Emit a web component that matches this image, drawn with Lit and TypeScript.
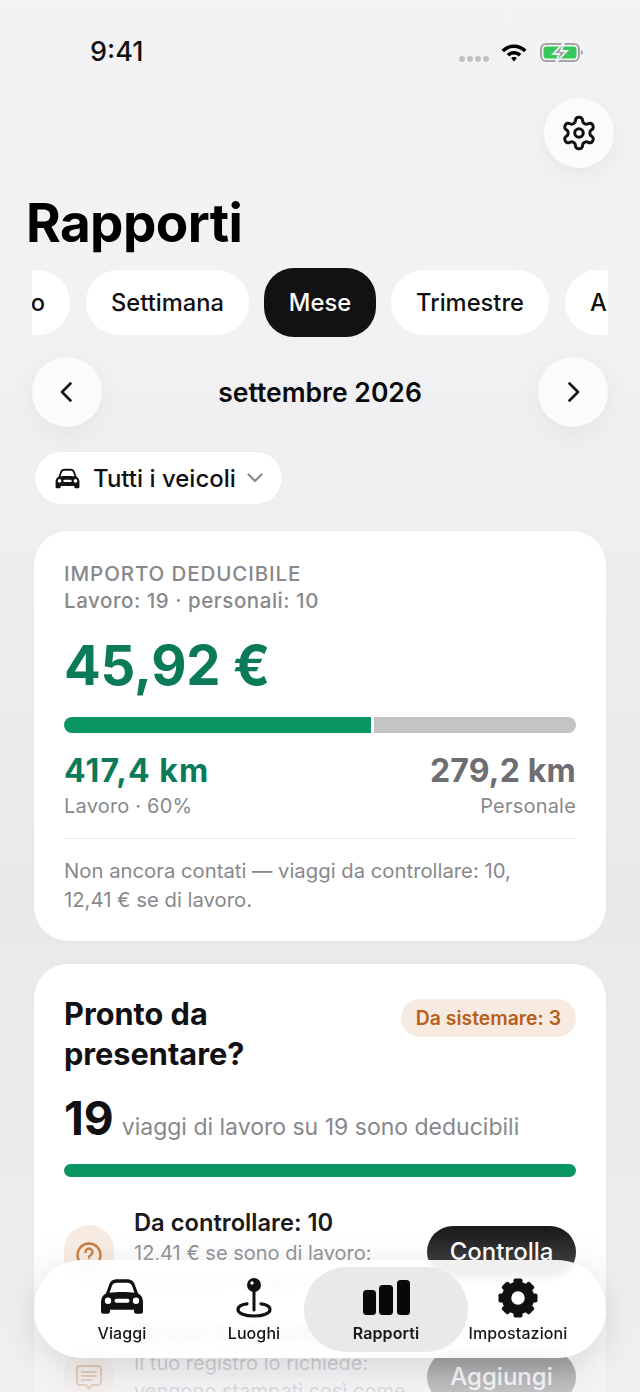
import { LitElement, html, css, svg } from "lit";
import { customElement } from "lit/decorators.js";

const gearOutline = html`<svg class="gear-o" viewBox="0 0 24 24" fill="none" stroke="#111114" stroke-width="1.9" stroke-linecap="round" stroke-linejoin="round"><path d="M12.22 2h-.44a2 2 0 0 0-2 2v.18a2 2 0 0 1-1 1.73l-.43.25a2 2 0 0 1-2 0l-.15-.08a2 2 0 0 0-2.73.73l-.22.38a2 2 0 0 0 .73 2.73l.15.1a2 2 0 0 1 1 1.72v.51a2 2 0 0 1-1 1.74l-.15.09a2 2 0 0 0-.73 2.73l.22.38a2 2 0 0 0 2.73.73l.15-.08a2 2 0 0 1 2 0l.43.25a2 2 0 0 1 1 1.73V20a2 2 0 0 0 2 2h.44a2 2 0 0 0 2-2v-.18a2 2 0 0 1 1-1.73l.43-.25a2 2 0 0 1 2 0l.15.08a2 2 0 0 0 2.73-.73l.22-.39a2 2 0 0 0-.73-2.73l-.15-.08a2 2 0 0 1-1-1.74v-.5a2 2 0 0 1 1-1.74l.15-.09a2 2 0 0 0 .73-2.73l-.22-.38a2 2 0 0 0-2.73-.73l-.15.08a2 2 0 0 1-2 0l-.43-.25a2 2 0 0 1-1-1.73V4a2 2 0 0 0-2-2z"/><circle cx="12" cy="12" r="2.7"/></svg>`;

const carPath = "M9 7C10 3 13 1 17 1H27C31 1 34 3 35 7L38 15C41.5 17 43 20 43 24V33A2.5 2.5 0 0 1 40.5 35.5H36.5A2.5 2.5 0 0 1 34 33V31.5H10V33A2.5 2.5 0 0 1 7.5 35.5H3.5A2.5 2.5 0 0 1 1 33V24C1 20 2.5 17 6 15ZM9.5 14.5C16 13.5 28 13.5 34.5 14.5L32 7.5C31.3 5.5 29.5 4.5 27 4.5H17C14.5 4.5 12.7 5.5 12 7.5ZM8 19.3A3.2 3.2 0 1 0 8 25.7A3.2 3.2 0 1 0 8 19.3ZM36 19.3A3.2 3.2 0 1 0 36 25.7A3.2 3.2 0 1 0 36 19.3ZM16.5 20.5A2 2 0 0 0 16.5 24.5H27.5A2 2 0 0 0 27.5 20.5Z";
const car = (cls: string) => html`<svg class=${cls} viewBox="0 0 44 36.5"><path fill="#111114" fill-rule="evenodd" d=${carPath}/></svg>`;

const teeth = [0, 45, 90, 135, 180, 225, 270, 315];
const gearFilled = html`<svg class="ti gearf" viewBox="0 0 40 40"><circle cx="20" cy="20" r="11.5" fill="none" stroke="#111114" stroke-width="9.5"/>${teeth.map(a => svg`<rect x="15.5" y="0.5" width="9" height="9" rx="1.8" fill="#111114" transform="rotate(${a} 20 20)"/>`)}</svg>`;

const chips = ["Giorno", "Settimana", "Mese", "Trimestre", "Anno"];

@customElement("app-root")
export class AppRoot extends LitElement {
  static styles = css`
    :host { display: block; position: relative; width: 640px; height: 1392px; overflow: hidden; font-family: Inter, "Noto Sans", sans-serif; color: #111114; background: linear-gradient(#f3f3f5 0, #f2f2f4 300px, #e9e9ec 900px, #eeeef0 1392px); }
    .status { display: flex; align-items: center; height: 20px; padding: 42px 56px 0 90px; }
    .time { font-size: 27px; font-weight: 500; line-height: 20px; flex: 1; }
    .dots { display: flex; gap: 2px; margin-top: 14px; margin-right: 11px; }
    .dots i { width: 6px; height: 6px; border-radius: 50%; background: #c2c2c5; }
    .wifi { width: 28px; height: 21px; margin-right: 12px; }
    .batt { width: 44px; height: 21px; }
    .top { display: flex; justify-content: flex-end; padding: 36px 26px 0 0; }
    .round { width: 70px; height: 70px; border-radius: 50%; background: #fbfbfc; display: flex; align-items: center; justify-content: center; box-shadow: 0 8px 24px rgba(0,0,0,.05); flex: none; }
    .gear-o { width: 38px; height: 38px; }
    h1 { margin: 25px 0 0 26px; font-size: 53px; line-height: 60px; font-weight: 700; letter-spacing: -.6px; color: #000; }
    .chips { margin: 15px 32px 0; height: 69px; overflow: hidden; display: flex; align-items: center; gap: 16px; }
    .chip { flex: none; height: 65px; padding: 0 25px; border-radius: 33px; background: #fff; display: flex; align-items: center; font-size: 23.7px; font-weight: 500; }
    .chip:first-child { margin-left: -88px; }
    .chip.on { background: #121214; color: #fff; height: 69px; padding: 0 25px; border-radius: 30px; margin: 0 -1px; }
    .nav { display: flex; align-items: center; justify-content: space-between; margin: 20px 32px 0; }
    .period { font-size: 26.5px; font-weight: 600; color: #0b0b0d; }
    .chev { width: 28px; height: 28px; }
    .veh { display: flex; align-items: center; height: 54px; box-sizing: border-box; width: 249px; margin: 24px 0 0 34px; padding: 0 20px; background: #fff; border-radius: 27px; border: 1px solid #ebebed; font-size: 24px; font-weight: 500; white-space: nowrap; }
    .carm { width: 25px; height: 21px; margin-right: 13px; flex: none; }
    .dn { width: 20px; height: 20px; margin-left: 9px; flex: none; }
    .card { margin: 0 34px; background: #fff; border-radius: 34px; box-shadow: 0 1px 3px rgba(0,0,0,.04); padding: 0 30px; }
    .c1 { margin-top: 26px; height: 410px; box-sizing: border-box; padding-top: 30px; }
    .lbl { font-size: 20.5px; font-weight: 500; letter-spacing: .9px; color: #88888c; line-height: 25px; }
    .sub { font-size: 20.5px; font-weight: 500; letter-spacing: .55px; color: #88888c; line-height: 30px; }
    .big { font-size: 54.4px; font-weight: 700; color: #0a7a58; line-height: 60px; margin-top: 19px; letter-spacing: -.2px; }
    .split { display: flex; gap: 3px; height: 16px; margin-top: 22px; }
    .split .w { width: 307px; background: #0a9663; border-radius: 8px 0 0 8px; }
    .split .p { flex: 1; background: #c4c4c6; border-radius: 0 8px 8px 0; }
    .kms { display: flex; justify-content: space-between; margin-top: 20px; }
    .km { font-size: 32px; font-weight: 700; line-height: 36px; }
    .km.g { color: #0a7a58; letter-spacing: 1.1px; }
    .km.n { color: #6d6d72; letter-spacing: .2px; }
    .kml { font-size: 20px; letter-spacing: .2px; color: #88888c; line-height: 30px; margin-top: 2px; }
    .right { text-align: right; }
    .div { height: 1px; background: #ebebed; margin-top: 17px; }
    .note { font-size: 20.3px; line-height: 29px; color: #88888c; margin-top: 17px; }
    .c2 { margin-top: 23px; height: 600px; box-sizing: border-box; padding-top: 30px; }
    .head { display: flex; justify-content: space-between; align-items: flex-start; }
    h2 { margin: 0; font-size: 30.7px; font-weight: 700; line-height: 40px; color: #111114; }
    .badge { margin-top: 5px; height: 38px; padding: 0 15px; border-radius: 19px; background: #f7ebe1; color: #b85f1b; font-size: 19.4px; font-weight: 600; display: flex; align-items: center; }
    .count { display: flex; align-items: baseline; margin-top: 16px; line-height: 56px; }
    .count b { font-size: 46px; font-weight: 700; margin-right: 8px; }
    .count span { font-size: 23px; color: #88888c; }
    .full { height: 13px; border-radius: 7px; background: #0a9663; margin-top: 9px; }
    .row { display: flex; align-items: flex-start; margin-top: 30px; }
    .row + .row { margin-top: 22px; }
    .ic { width: 50px; height: 60px; border-radius: 25px; background: #f7ebe1; display: flex; align-items: center; justify-content: center; flex: none; margin: 18px 20px 0 0; }
    .row + .row .ic { margin-top: 30px; }
    .ic svg { width: 28px; height: 28px; }
    .txt { flex: 1; min-width: 0; }
    .t { font-size: 23.7px; font-weight: 600; line-height: 32px; color: #1a1a1c; }
    .d { font-size: 20px; line-height: 28px; color: #88888c; }
    .btn { flex: none; width: 149px; box-sizing: border-box; text-align: center; height: 52px; line-height: 52px; border-radius: 26px; background: #1c1c1e; color: #fff; font-size: 24px; font-weight: 500; margin-top: 19px; }
    .row + .row .btn { margin-top: 34px; }
    .fade { position: absolute; left: 0; right: 0; top: 1230px; height: 162px; background: linear-gradient(rgba(240,240,243,0) 0, rgba(240,240,243,.72) 145px, rgba(240,240,243,.78) 162px); pointer-events: none; }
    .tabs { position: absolute; left: 34px; top: 1260px; width: 572px; height: 98px; box-sizing: border-box; padding: 0 22px; border-radius: 49px; background: rgba(255,255,255,.92); backdrop-filter: blur(3px); box-shadow: 0 10px 34px rgba(0,0,0,.12); display: grid; grid-template-columns: repeat(4, 132px); }
    .tab { position: relative; display: flex; flex-direction: column; align-items: center; font-size: 16px; font-weight: 500; color: #17171a; min-width: 0; }
    .tab.on { font-weight: 600; }
    .tab.on::before { content: ""; position: absolute; left: -16px; right: -16px; top: 7px; height: 85px; border-radius: 42px; background: #e9e9ea; }
    .slot { position: relative; height: 40px; margin-top: 18px; display: flex; align-items: flex-end; justify-content: center; }
    .name { position: relative; margin-top: 5px; line-height: 20px; white-space: nowrap; letter-spacing: .1px; }
    .ti { display: block; }
    .cart { width: 44px; height: 37px; margin-bottom: 3px; }
    .pin { width: 36px; height: 41px; }
    .bars { width: 47px; height: 35px; margin-bottom: 3px; }
    .gearf { width: 40px; height: 40px; }
  `;

  render() {
    return html`
      <div class="status">
        <div class="time">9:41</div>
        <div class="dots"><i></i><i></i><i></i><i></i></div>
        <svg class="wifi" viewBox="0 0 28 21"><path fill="#000" d="M14 2.500C9 2.500 4.700 4.500 1.500 7.700L4 10.300C6.600 7.700 10.100 6.100 14 6.100S21.400 7.700 24 10.300L26.500 7.700C23.300 4.500 19 2.500 14 2.500ZM14 8.900C11.200 8.900 8.600 10 6.700 11.900L9.200 14.500C10.400 13.300 12.100 12.500 14 12.500S17.600 13.300 18.800 14.500L21.300 11.900C19.400 10 16.800 8.900 14 8.900ZM14 14.900C12.800 14.900 11.800 15.400 11.100 16.100L14 19.500L16.900 16.100C16.200 15.400 15.200 14.900 14 14.900Z"/></svg>
        <svg class="batt" viewBox="0 0 44 21"><rect x="1" y="2" width="38" height="17" rx="5" fill="none" stroke="#a3a3a6" stroke-width="2"/><rect x="3.500" y="4.500" width="33" height="12" rx="3" fill="#34c759"/><path d="M41 8v5c1.200-.4 2-1.400 2-2.500S42.200 8.400 41 8Z" fill="#a3a3a6"/><path d="M24.500 0 13 12H19L15.500 21 27 9H21Z" fill="#a3a3a6" stroke="#f2f2f4" stroke-width="1.800"/></svg>
      </div>
      <div class="top"><div class="round">${gearOutline}</div></div>
      <h1>Rapporti</h1>
      <div class="chips">${chips.map(c => html`<div class="chip ${c === "Mese" ? "on" : ""}">${c}</div>`)}</div>
      <div class="nav">
        <div class="round"><svg class="chev" viewBox="0 0 28 28" fill="none" stroke="#111114" stroke-width="2.600" stroke-linecap="round" stroke-linejoin="round"><path d="M17.500 5.500 9 14l8.500 8.500"/></svg></div>
        <div class="period">settembre 2026</div>
        <div class="round"><svg class="chev" viewBox="0 0 28 28" fill="none" stroke="#111114" stroke-width="2.600" stroke-linecap="round" stroke-linejoin="round"><path d="M10.500 5.500 19 14l-8.500 8.500"/></svg></div>
      </div>
      <div class="veh">${car("carm")}<span>Tutti i veicoli</span><svg class="dn" viewBox="0 0 20 20" fill="none" stroke="#8a8a8e" stroke-width="2.200" stroke-linecap="round" stroke-linejoin="round"><path d="M3.500 6.500 10 13l6.500-6.500"/></svg></div>

      <div class="card c1">
        <div class="lbl">IMPORTO DEDUCIBILE</div>
        <div class="sub">Lavoro: 19 · personali: 10</div>
        <div class="big">45,92 €</div>
        <div class="split"><div class="w"></div><div class="p"></div></div>
        <div class="kms">
          <div><div class="km g">417,4 km</div><div class="kml">Lavoro · 60%</div></div>
          <div class="right"><div class="km n">279,2 km</div><div class="kml">Personale</div></div>
        </div>
        <div class="div"></div>
        <div class="note">Non ancora contati — viaggi da controllare: 10,<br>12,41 € se di lavoro.</div>
      </div>

      <div class="card c2">
        <div class="head"><h2>Pronto da<br>presentare?</h2><div class="badge">Da sistemare: 3</div></div>
        <div class="count"><b>19</b><span>viaggi di lavoro su 19 sono deducibili</span></div>
        <div class="full"></div>
        <div class="row">
          <div class="ic"><svg viewBox="0 0 28 28" fill="none" stroke="#c4722f" stroke-width="2.400" stroke-linecap="round"><circle cx="14" cy="14" r="11.500"/><path d="M10.500 11a3.500 3.500 0 1 1 5.300 3c-1.200.7-1.800 1.400-1.800 2.500"/><circle cx="14" cy="20.300" r=".6"/></svg></div>
          <div class="txt"><div class="t">Da controllare: 10</div><div class="d">12,41 € se sono di lavoro:<br>conferma i viaggi aperti</div></div>
          <div class="btn">Controlla</div>
        </div>
        <div class="row">
          <div class="ic"><svg viewBox="0 0 28 28" fill="none" stroke="#c4722f" stroke-width="2.200" stroke-linecap="round" stroke-linejoin="round"><path d="M5 3h18a3 3 0 0 1 3 3v13a3 3 0 0 1-3 3h-6l-3 4-3-4H5a3 3 0 0 1-3-3V6a3 3 0 0 1 3-3Z"/><path d="M7 9h14M7 13h14M7 17h9"/></svg></div>
          <div class="txt"><div class="t">Scopo mancante: 1</div><div class="d">Il tuo registro lo richiede:<br>vengono stampati così come</div></div>
          <div class="btn">Aggiungi</div>
        </div>
      </div>

      <div class="fade"></div>
      <div class="tabs">
        <div class="tab"><div class="slot">${car("ti cart")}</div><div class="name">Viaggi</div></div>
        <div class="tab"><div class="slot"><svg class="ti pin" viewBox="0 0 36 41" fill="none"><path d="M11 26.800C5.500 27.500 2 29.500 2 32.500 2 36.500 9 39 18 39S34 36.500 34 32.500C34 29.500 30.500 27.500 25 26.800" stroke="#111114" stroke-width="3.200" stroke-linecap="round"/><path d="M18 10V33" stroke="#111114" stroke-width="3" stroke-linecap="round"/><circle cx="18" cy="8" r="7" fill="#111114"/><circle cx="16" cy="6" r="1.700" fill="#fff"/></svg></div><div class="name">Luoghi</div></div>
        <div class="tab on"><div class="slot"><svg class="ti bars" viewBox="0 0 47 35"><rect x="0" y="10" width="13" height="25" rx="3.500" fill="#08080a"/><rect x="16" y="5" width="14" height="30" rx="3.500" fill="#08080a"/><rect x="34" y="0" width="13" height="35" rx="3.500" fill="#08080a"/></svg></div><div class="name">Rapporti</div></div>
        <div class="tab"><div class="slot">${gearFilled}</div><div class="name">Impostazioni</div></div>
      </div>
    `;
  }
}
